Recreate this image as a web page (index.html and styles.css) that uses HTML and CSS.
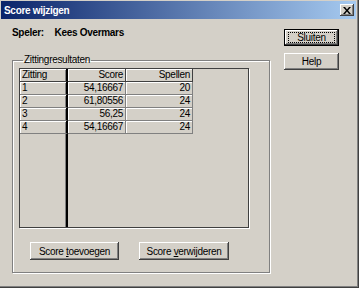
FILE: index.html
```html
<!DOCTYPE html>
<html lang="nl">
<head>
  <meta charset="UTF-8">
  <title>Score wijzigen</title>
  <link rel="stylesheet" href="styles.css">
</head>
<body>
  <div class="window">
    <div class="titlebar">
      <span class="title">Score wijzigen</span>
      <button class="close-btn" aria-label="Sluiten">
        <svg width="8" height="7" viewBox="0 0 8 7">
          <path d="M0 0h2l2 2.5L6 0h2L5 3.5 8 7H6L4 4.5 2 7H0l3-3.5z" fill="#000"/>
        </svg>
      </button>
    </div>

    <div class="content">
      <div class="main">
        <div class="player">
          <span class="player-label">Speler:</span>
          <span class="player-name">Kees Overmars</span>
        </div>

        <fieldset class="groupbox">
          <legend>Zittingresultaten</legend>

          <div class="grid">
            <table>
              <tr class="head">
                <td class="col-zitting">Zitting</td>
                <td class="col-score">Score</td>
                <td class="col-spellen">Spellen</td>
                <td class="col-rest"></td>
              </tr>
              <tr>
                <td class="col-zitting">1</td>
                <td class="col-score">54,16667</td>
                <td class="col-spellen">20</td>
                <td class="col-rest"></td>
              </tr>
              <tr>
                <td class="col-zitting">2</td>
                <td class="col-score">61,80556</td>
                <td class="col-spellen">24</td>
                <td class="col-rest"></td>
              </tr>
              <tr>
                <td class="col-zitting">3</td>
                <td class="col-score">56,25</td>
                <td class="col-spellen">24</td>
                <td class="col-rest"></td>
              </tr>
              <tr>
                <td class="col-zitting">4</td>
                <td class="col-score">54,16667</td>
                <td class="col-spellen">24</td>
                <td class="col-rest"></td>
              </tr>
              <tr class="filler">
                <td class="col-zitting"></td>
                <td></td>
                <td></td>
                <td></td>
              </tr>
            </table>
          </div>

          <div class="group-buttons">
            <button class="btn btn-wide">Score <u>t</u>oevoegen</button>
            <button class="btn btn-wide">Score <u>v</u>erwijderen</button>
          </div>
        </fieldset>
      </div>

      <div class="side">
        <button class="btn btn-default"><span class="focus">Sluiten</span></button>
        <button class="btn">Help</button>
      </div>
    </div>
  </div>
</body>
</html>
```

FILE: styles.css
```css
/* Classic Windows dialog look */
body {
  margin: 0;
  font-family: 'Liberation Sans', Arial, sans-serif;
  font-size: 10px;
  letter-spacing: -0.3px;
  color: #000;
  background: #d4d0c8;
}

.window {
  width: 359px;
  height: 288px;
  box-sizing: border-box;
  background: #d4d0c8;
  padding: 1px 0 0 1px;
  border-right: 1px solid #404040;
  border-bottom: 1px solid #404040;
  box-shadow: inset -1px -1px 0 #808080;
}

.titlebar {
  height: 18px;
  margin-right: 2px;
  display: flex;
  align-items: center;
  justify-content: space-between;
  padding: 0 2px 0 3px;
  background: linear-gradient(to right, #0a246a, #a6caf0);
}

.title {
  color: #fff;
  font-weight: bold;
}

.close-btn {
  width: 14px;
  height: 12px;
  padding: 0;
  margin: 0;
  display: flex;
  align-items: center;
  justify-content: center;
  background: #d4d0c8;
  border: none;
  box-shadow: inset -1px -1px 0 #404040, inset 1px 1px 0 #fff, inset -2px -2px 0 #808080;
}

.content {
  display: flex;
  padding: 8px 0 0 11px;
}

.main {
  width: 258px;
}

.player {
  font-weight: bold;
  height: 12px;
  line-height: 12px;
}

.player-label {
  display: inline-block;
  width: 40px;
}

.groupbox {
  margin: 16px 0 0;
  padding: 3px 0 0 6px;
  height: 218px;
  box-sizing: border-box;
  border: 1px solid #808080;
  box-shadow: inset 1px 1px 0 #fff, 1px 1px 0 #fff;
}

.groupbox legend {
  padding: 0 1px;
  margin-left: 4px;
  line-height: 10px;
}

.grid {
  width: 230px;
  height: 160px;
  box-sizing: border-box;
  background: #d4d0c8;
  border: 1px solid #404040;
  box-shadow: 1px 1px 0 #fff;
}

.grid table {
  border-collapse: separate;
  border-spacing: 0;
  width: 100%;
  height: 100%;
  table-layout: fixed;
}

.grid td {
  height: 12px;
  padding: 0 2px;
  line-height: 12px;
  white-space: nowrap;
  overflow: hidden;
  border-right: 1px solid #808080;
  border-bottom: 1px solid #808080;
  box-shadow: inset 1px 1px 0 #fff;
}

.grid .head td {
  border-right-color: #404040;
  border-bottom-color: #404040;
}

.grid td.col-zitting {
  width: 42px;
  border-right: 2px solid #000;
  box-shadow: inset 1px 1px 0 #fff, inset -1px 0 0 #808080;
}

.grid td.col-score {
  width: 53px;
  text-align: right;
}

.grid td.col-spellen {
  width: 62px;
  text-align: right;
}

.grid td.col-rest,
.grid .filler td {
  border: none;
  box-shadow: none;
}

.grid .filler td {
  height: auto;
}

.grid .filler td.col-zitting {
  border-right: 2px solid #000;
  box-shadow: inset -1px 0 0 #808080;
}

.group-buttons {
  display: flex;
  gap: 20px;
  margin: 14px 0 0 11px;
}

.btn {
  height: 18px;
  padding: 0;
  font-family: inherit;
  font-size: 10px;
  letter-spacing: -0.3px;
  color: #000;
  background: #d4d0c8;
  border: none;
  box-shadow: inset -1px -1px 0 #404040, inset 1px 1px 0 #fff, inset -2px -2px 0 #808080;
}

.btn-wide {
  width: 89px;
}

.btn-wide + .btn-wide {
  width: 90px;
}

.side {
  display: flex;
  flex-direction: column;
  gap: 7px;
  margin: 2px 0 0 14px;
}

.side .btn {
  width: 55px;
  height: 17px;
}

.btn-default {
  display: flex;
  align-items: center;
  justify-content: center;
  box-shadow: inset 0 0 0 1px #000, inset -2px -2px 0 #404040, inset 2px 2px 0 #fff, inset -3px -3px 0 #808080;
}

.focus {
  display: block;
  width: 45px;
  height: 9px;
  line-height: 9px;
  border: 1px dotted #000;
}
```
